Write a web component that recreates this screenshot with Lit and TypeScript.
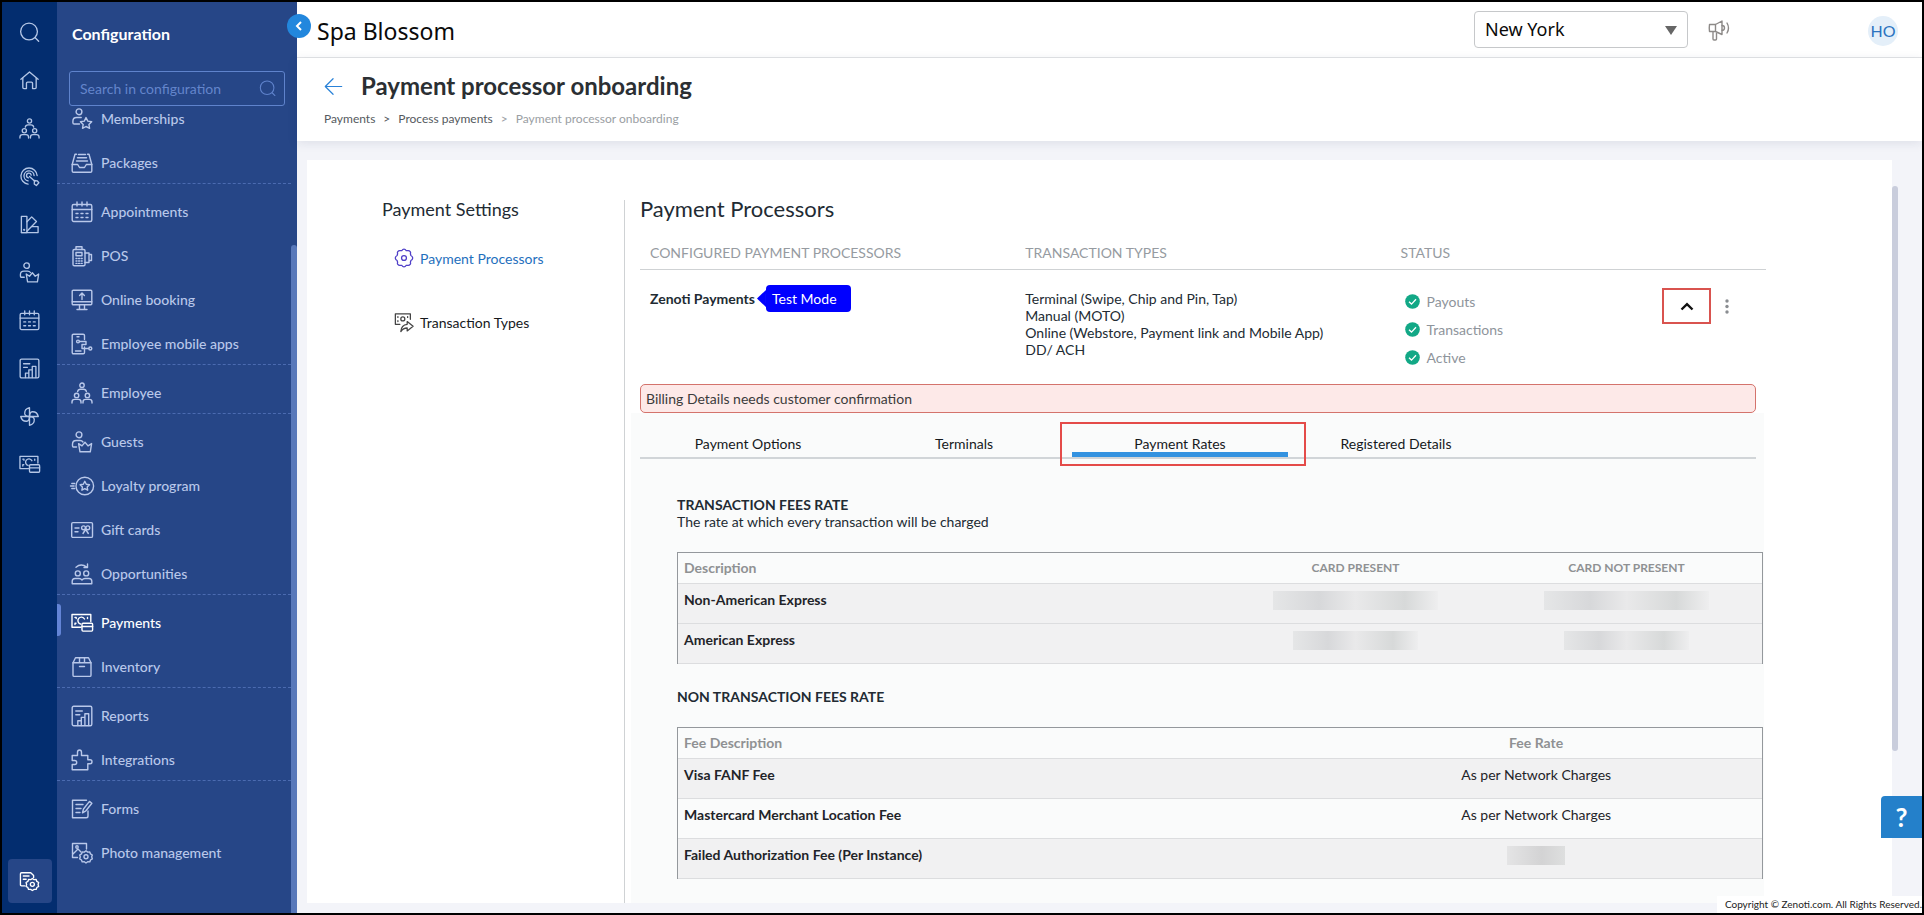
import { LitElement, html, css, svg } from "lit";
import { customElement, property } from "lit/decorators.js";
import { classMap } from "lit/directives/class-map.js";

/* Outline icons, all drawn on a 22 x 22 grid. */
const icons: Record<string, unknown> = {
  search: svg`<circle cx="10.5" cy="10" r="8.8"/><path d="M17 16.5l3.6 3.6"/>`,
  home: svg`<path d="M2 9.8L11 2l9 7.8"/><path d="M4 8.5v9.8q0 1.2 1.2 1.2h2.6v-5.6q0-1.2 1.2-1.2h4q1.2 0 1.2 1.2v5.6h2.6q1.2 0 1.2-1.2V8.5"/>`,
  team: svg`<circle cx="11" cy="3.2" r="2.200"/><path d="M6.600 9.600q.4-2.400 2.800-2.400h3.200q2.400 0 2.800 2.400"/><circle cx="5.600" cy="13.400" r="2.200"/><circle cx="16.400" cy="13.400" r="2.200"/><path d="M1 21v-1q0-2.600 2.600-2.600h3.800Q10 17.400 10 20v1M12 21v-1q0-2.600 2.600-2.600h3.800Q21 17.400 21 20v1"/>`,
  target: svg`<path d="M19 10A8.500 8.500 0 1 0 9.500 19"/><path d="M15.800 10a5.300 5.300 0 1 0-6.300 5.600"/><path d="M12.800 9.500a2.500 2.500 0 1 0-3 2.900"/><path d="M11 11l5.500 5"/><path d="M16.200 15.200l2.800.300 1.800 2-2.600 3-2.200-1.600z"/>`,
  swatch: svg`<path d="M2.500 2.500h5.800v17H2.500z"/><path d="M8.300 8.200l5-5.200 5 4.800L8.300 18"/><path d="M13.600 13.200h6.400v6.300H2.500"/><circle cx="5.400" cy="16.600" r=".500"/>`,
  guest: svg`<circle cx="8" cy="3.800" r="2.900"/><path d="M5.500 16H2.800q-1.300 0-1.300-1.300v-1.500q0-3.700 3.700-3.700H9q2 0 3 1.500"/><path d="M7.600 12.600l3.400 2.300 3-3.600 3 3.600 3.600-2.300-1.300 8.200H9z"/>`,
  calendar: svg`<rect x="1.200" y="3.500" width="19.600" height="17" rx="1.500"/><path d="M1.200 8.500h19.600M6 1v4M11 1v4M16 1v4"/><path d="M5 12.500h2M10 12.500h2M15 12.500h2M5 16.500h2M10 16.500h2M15 16.500h2"/>`,
  report: svg`<rect x="1.200" y="1.200" width="19.600" height="19.600" rx="1.500"/><path d="M4.800 6h6.500M4.800 9.800h4"/><path d="M6.800 20.500v-4.700h3.500v4.700M10.300 16v-3.600h3.600v8M13.900 12.600V8.800h3.800v11.700"/>`,
  fan: svg`<path d="M11 11V1.800Q5.800 3 6 8q.400 3 5 3z"/><path d="M11 11h9.200Q19 5.800 14 6q-3 .400-3 5z"/><path d="M11 11v9.200q5.200-1.200 5-6.200-.400-3-5-3z"/><path d="M11 11H1.800Q3 16.200 8 16q3-.400 3-5z"/>`,
  cash: svg`<path d="M10 15.300H1V2.500h18.800v7"/><path d="M13.500 7a3.500 3.500 0 1 0-4 5M4 5.400h1.200v1.200M16.500 5.400v1.200M4 12.600v-1.400h1"/><rect x="11" y="11.300" width="10.600" height="7.800" rx="1"/><path d="M11 14.500h10.600"/>`,
  settings: svg`<path d="M6 15.500H2.700q-1.200 0-1.200-1.200V3q0-1.200 1.200-1.200h9.600l3 3v2.200"/><path d="M4.500 5.200h6M4.500 8.600h3"/><circle cx="14" cy="14" r="2.100"/><path d="M14 7.800l1.800 1.300 2.200-.200.700 2 1.900 1.200-.600 2 .600 2-1.900 1.200-.700 2-2.200-.100L14 20.400l-1.800-1.200-2.200.100-.700-2-1.900-1.200.600-2-.600-2 1.900-1.200.700-2 2.200.200z"/>`,
  member: svg`<circle cx="8" cy="3.800" r="2.900"/><path d="M8.500 16H3.200q-1.300 0-1.300-1.300v-1.500q0-3.700 3.700-3.700h4.600"/><path d="M15 9.600l1.800 3.500 3.900.600-2.800 2.700.7 3.900-3.600-1.800-3.500 1.800.700-3.900-2.800-2.700 3.900-.600z"/>`,
  box: svg`<path d="M1.200 12.500V19q0 1.300 1.300 1.300h17q1.300 0 1.300-1.300v-6.500h-5.500l-1.800 3h-5l-1.800-3z"/><path d="M1.200 12.500L4 2.200h1.500M20.800 12.500L18 2.200h-1.500"/><path d="M7.500 2.500h7M6.500 5.800h9M5.500 9h11"/>`,
  pos: svg`<rect x="2" y="4.500" width="12" height="16.300" rx="1.300"/><path d="M5 4.500V1.800h6v2.700"/><rect x="5" y="7.500" width="6" height="3.200"/><path d="M5 13.500h1M7.600 13.500h1M10.200 13.500h1M5 16h1M7.600 16h1M10.200 16h1M5 18.400h1M7.600 18.400h1M10.200 18.400h1"/><path d="M14 8h4v9.500h-4M18 9.500h2.500v6H18"/>`,
  online: svg`<rect x="1.200" y="1.200" width="19.600" height="14.500" rx="1"/><path d="M1.200 12.800h19.600M8.500 15.700v4.500M13.500 15.700v4.500M6 20.500h10M11 10.500V4.200M8.600 6.500L11 4.100l2.400 2.400"/>`,
  mobile: svg`<path d="M13.500 14v5.500q0 1.300-1.300 1.300H2.500q-1.300 0-1.300-1.300v-17Q1.200 1.200 2.500 1.200h9.700q1.300 0 1.300 1.300v4"/><path d="M4.500 18h5.500M6 3.800h2"/><circle cx="7" cy="8.500" r="1.400"/><circle cx="19.300" cy="15.500" r="1.500"/><path d="M8.400 8.500h6.600v3h-4v4h6.800"/>`,
  loyalty: svg`<circle cx="13.800" cy="11" r="8.800"/><path d="M13.800 6.300l1.500 3 3.200.500-2.300 2.200.500 3.200-2.900-1.500-2.900 1.500.500-3.200-2.300-2.200 3.200-.500z"/><path d="M.800 8.500h3M-.500 11h3.600M.800 13.500h3"/>`,
  gift: svg`<rect x=".700" y="3.600" width="20.800" height="14.800" rx="1.200"/><path d="M4 9h4M4 12.800h3"/><circle cx="12.500" cy="8.800" r="1.900"/><circle cx="16.800" cy="8.800" r="1.900"/><path d="M14.600 10.500l-2.600 4M14.700 10.500l2.600 4"/>`,
  opp: svg`<circle cx="6.800" cy="10.400" r="2.500"/><circle cx="15.200" cy="10.400" r="2.500"/><path d="M1.200 20.800v-2.500q0-2.800 2.800-2.800h4q1.800 0 3 1.500 1.200-1.500 3-1.500h4q2.800 0 2.800 2.800v2.500z"/><path d="M5 4.200q5-4.500 11 0M16.500 1v3.500h-3.500"/>`,
  inventory: svg`<path d="M2 6.800L4.500 1.800h13L20 6.800v12.400q0 1.200-1.200 1.200H3.200Q2 20.400 2 19.200z"/><path d="M2 6.800h18M8.500 1.800v5M13.500 1.800v5M8.500 10.500h5"/>`,
  puzzle: svg`<path d="M1.200 6.500h5.300V3.200Q6.500 1 8.500 1t2 2.200v3.300h6.300v4.300h2.200q2 0 2 2t-2 2h-2.200v6H1.200v-5.300h2.500q2 0 2-2t-2-2H1.200z"/>`,
  form: svg`<path d="M17 13v5q0 1.800-1.800 1.800H1.500V2.200h14"/><path d="M5 6.500h7M5 10.500h5M5 14.500h4"/><path d="M11.500 14.800l1-3.800 6-7.600 2.400 1.800-6 7.600z"/>`,
  photo: svg`<path d="M6.500 15.500H1.500V1.500h14V7M1.500 12.500L7 7l3 3"/><circle cx="6" cy="5" r="1.200"/><circle cx="15" cy="14.800" r="2"/><path d="M15 8.800l1.700 1.300 2.100-.200.700 2 1.800 1.100-.600 1.900.600 1.900-1.800 1.200-.700 1.900-2.100-.100L15 21l-1.700-1.200-2.100.100-.700-1.900-1.800-1.200.600-1.900-.600-1.900 1.800-1.100.700-2 2.100.200z"/>`,
  gear: svg`<circle cx="11" cy="11" r="2.700"/><path d="M11 1.300q1.500 0 2.300 1.500 1 .3 1.800.1 1.700-.3 2.700 1.100.8 1.100.2 2.400l.6 1.800q1.700.9 1.900 2.300v1q-.2 1.400-1.900 2.300l-.6 1.800q.6 1.300-.2 2.400-1 1.400-2.700 1.100-.8-.2-1.800.1-.8 1.500-2.300 1.500t-2.300-1.500q-1-.3-1.800-.1-1.700.3-2.700-1.100-.8-1.100-.2-2.400l-.6-1.800Q1.700 12.900 1.500 11.500v-1q.2-1.400 1.900-2.300L4 6.400q-.6-1.300.2-2.400 1-1.400 2.700-1.100.8.200 1.800-.1Q9.500 1.300 11 1.300z"/>`,
  transfer: svg`<path d="M6.500 13.500H1.500V2h16.500v6"/><circle cx="9.700" cy="7.600" r="2.200"/><path d="M4.300 5v1M4.300 9.500v1M15 5v1"/><path d="M7.500 21.500q.5-7.500 7-8v-3l6.500 5.300-6.500 5v-3.200q-4.500 0-7 3.900z"/>`,
  horn: svg`<path d="M1.500 5.500Q1 9 1.500 12.500h6L14 15.500V2L7.500 5.500zM7.500 5.500v7M5 12.500V20q0 1 1 1h1.500q1 0 1-1v-7"/><path d="M14 6.500q2.500 0 2.500 2.400T14 11.300M19 4q3 5 0 10"/>`,
  back: svg`<path d="M20.500 11H2.500M10.500 2L1.500 11l9 9"/>`,
};

@customElement("z-icon")
class ZIcon extends LitElement {
  @property() name = "search";
  static styles = css`
    :host { display: inline-flex; flex: none; width: 22px; height: 22px; }
    svg { width: 100%; height: 100%; fill: none; stroke: currentColor; stroke-width: 1.4; stroke-linejoin: round; stroke-linecap: round; overflow: visible; }
  `;
  render() {
    return html`<svg viewBox="0 0 22 22" aria-hidden="true">${icons[this.name]}</svg>`;
  }
}

const menu = [
  [["member", "Memberships"], ["box", "Packages"]],
  [["calendar", "Appointments"], ["pos", "POS"], ["online", "Online booking"], ["mobile", "Employee mobile apps"]],
  [["team", "Employee"]],
  [["guest", "Guests"], ["loyalty", "Loyalty program"], ["gift", "Gift cards"], ["opp", "Opportunities"]],
  [["cash", "Payments"], ["inventory", "Inventory"]],
  [["report", "Reports"], ["puzzle", "Integrations"]],
  [["form", "Forms"], ["photo", "Photo management"]],
];

@customElement("z-sidebar")
class ZSidebar extends LitElement {
  static styles = css`
    :host { display: flex; flex: none; color: #b9c8ea; font: 14px/20px Lato, sans-serif; }
    * { box-sizing: border-box; }
    a { color: inherit; text-decoration: none; }
    .rail { width: 55px; background: #032d6f; display: flex; flex-direction: column; align-items: center; padding: 6px 0 10px; color: #b4c6e6; }
    .rail-link { height: 48px; display: flex; align-items: center; }
    .rail-link z-icon { width: 21px; height: 21px; }
    .rail-link.current { margin-top: auto; width: 44px; height: 44px; justify-content: center; background: #264687; border-radius: 4px; color: #fff; }
    .panel { position: relative; width: 240px; background: #264687; display: flex; flex-direction: column; }
    .title { margin: 0; padding: 22px 15px 0; font-size: 16px; line-height: 20px; font-weight: 700; color: #fff; }
    .search { margin: 27px 12px 0; height: 35px; border: 1px solid #5f83cc; border-radius: 3px; display: flex; align-items: center; padding: 0 8px 0 10px; color: #5f83cc; }
    .search input { flex: 1; min-width: 0; border: 0; padding: 0; background: none; outline: 0; font: inherit; color: #fff; }
    .search input::placeholder { color: #6485cb; opacity: 1; }
    .search z-icon { width: 17px; height: 17px; }
    .body { flex: 1; min-height: 0; display: flex; }
    .list { flex: 1; overflow: visible; margin-top: -7px; }
    .group { display: flex; flex-direction: column; gap: 4px; padding: 8px 0 0; border-bottom: 1px dashed #4b6bb0; }
    .group:first-child { padding-top: 0; }
    .group:last-child { border-bottom: 0; }
    .item { height: 40px; display: flex; align-items: center; gap: 8px; padding-left: 14px; position: relative; font-weight: 500; }
    .item.active { color: #fff; }
    .item.active::before { content: ""; position: absolute; left: 0; top: 1px; width: 4px; height: 32px; background: #6384d6; border-radius: 0 3px 3px 0; }
    .thumb { width: 6px; margin-top: 139px; background: #5878ba; border-radius: 3px 3px 0 0; }
    .collapse { position: absolute; z-index: 2; top: 12px; right: -14px; width: 24px; height: 24px; padding: 0; border: 0; border-radius: 50%; background: #2287dd; display: grid; place-items: center; }
    .collapse svg { width: 8px; height: 10px; fill: none; stroke: #fff; stroke-width: 2; }
  `;
  render() {
    const rail = ["search", "home", "team", "target", "swatch", "guest", "calendar", "report", "fan", "cash"];
    return html`
      <nav class="rail" aria-label="Main">
        ${rail.map((n) => html`<a class="rail-link" href="#${n}" aria-label=${n}><z-icon name=${n}></z-icon></a>`)}
        <a class="rail-link current" href="#configuration" aria-label="Configuration"><z-icon name="settings"></z-icon></a>
      </nav>
      <div class="panel">
        <button class="collapse" aria-label="Collapse menu"><svg viewBox="0 0 8 10"><path d="M6 1L2 5l4 4"/></svg></button>
        <h2 class="title">Configuration</h2>
        <label class="search"><input type="text" placeholder="Search in configuration" aria-label="Search in configuration" /><z-icon name="search"></z-icon></label>
        <div class="body">
          <nav class="list" aria-label="Configuration">
            ${menu.map((g) => html`<div class="group">${g.map(([icon, label]) => html`
              <a class=${classMap({ item: true, active: label === "Payments" })} href="#${icon}"><z-icon name=${icon}></z-icon>${label}</a>`)}</div>`)}
          </nav>
          <div class="thumb"></div>
        </div>
      </div>`;
  }
}

@customElement("z-processors")
class ZProcessors extends LitElement {
  static styles = css`
    :host { display: block; color: #222b33; font: 14px/17px Lato, sans-serif; }
    * { box-sizing: border-box; }
    table { width: 100%; border-spacing: 0; table-layout: fixed; }
    th, td { text-align: left; vertical-align: top; }
    .heading { margin: 0; font-size: 22px; line-height: 18px; font-weight: 400; }
    .list th { padding: 26px 0 8px 10px; font-weight: 400; color: #969ba1; border-bottom: 1px solid #cfd2d4; }
    .list td { padding: 20px 0 0 10px; }
    .list .c-type { width: 33.33%; }
    .list .c-action { width: 9.2%; }
    .list td.name { padding-top: 15px; }
    .name div { display: flex; align-items: center; gap: 2px; }
    .badge { display: flex; height: 27px; color: #fff; font-weight: 400; align-items: stretch; }
    .badge::before { content: ""; width: 9px; margin: 5px 0; background: #00f; clip-path: polygon(100% 0, 100% 100%, 0 50%); }
    .badge span { display: flex; align-items: center; background: #00f; border-radius: 4px; padding: 0 14px 0 6px; }
    .list td.status { padding: 17px 0 13px 14px; }
    .status ul { margin: 0; padding: 0; list-style: none; color: #8e949b; }
    .status li { height: 28px; display: flex; align-items: center; gap: 7px; }
    .tick { width: 15px; height: 15px; flex: none; }
    .list td.actions { padding: 18px 0 0; }
    .actions div { display: flex; align-items: center; gap: 11px; }
    .toggle { width: 49px; height: 36px; padding: 0; background: none; border: 2px solid #d9534f; display: grid; place-items: center; }
    .toggle svg { width: 14px; height: 9px; fill: none; stroke: #111; stroke-width: 2.4; }
    .more { padding: 0; border: 0; background: none; width: 10px; height: 16px; display: grid; place-items: center; }
    .more svg { width: 4px; height: 15px; fill: #8a8d91; }
    .alert { margin-right: 10px; height: 29px; display: flex; align-items: center; padding: 0 5px; border: 1px solid #d4736c; border-radius: 5px; background: #fde9e8; color: #3b3b3b; }
    .panel { margin: 0 2px 0 -9px; background: #fafbfb; min-height: 490px; }
    .tabs { margin: 0 8px 0 9px; display: flex; border-bottom: 2px solid #d1d5d8; }
    .tab { position: relative; flex: 0 1 216px; padding: 23px 0 0; border: 0; border-bottom: 5px solid transparent; background: none; font: 14px/16px Lato, sans-serif; color: #16191c; text-align: center; }
    .tab.active { border-bottom-color: #3392e0; }
    .tab.active::after { content: ""; position: absolute; left: -12px; right: -18px; top: 9px; bottom: -14px; border: 2px solid #e44b49; pointer-events: none; }
    .rates { padding: 37px 1px 0 46px; }
    h4 { margin: 0; font-size: 14px; line-height: 17px; font-weight: 700; }
    p { margin: 0; }
    .fees { margin: 22px 0 24px; border: 1px solid #94989c; border-bottom: 0; color: #1f2429; }
    .fees th, .fees td { padding: 7px 6px 15px; border-bottom: 1px solid #dcdddf; text-align: center; }
    .fees thead th { padding: 6px 6px 7px; color: #8f9193; font-weight: 700; }
    .fees thead .small { font-size: 12px; }
    .fees th:first-child { text-align: left; }
    .shade th, .shade td { background: #f1f1f2; }
    .half { width: 50%; }
    .wide { width: 58.33%; }
    .masked { display: block; height: 19px; margin: 0 auto -2px; background: linear-gradient(90deg, #e5e6e7, #d7d8da 28%, #e9e9ea 50%, #d7d9d9 80%, #eeeeef); }
    .masked.l { width: 165px; }
    .masked.m { width: 125px; }
    .masked.s { width: 58px; background: linear-gradient(90deg, #e4e4e5, #d3d3d4 60%, #dedfdf); }
  `;
  private mask(size: string) {
    return html`<span class="masked ${size}" role="img" aria-label="Hidden value"></span>`;
  }
  render() {
    const tabs = ["Payment Options", "Terminals", "Payment Rates", "Registered Details"];
    return html`
      <h2 class="heading">Payment Processors</h2>
      <table class="list">
        <thead><tr>
          <th class="c-type">CONFIGURED PAYMENT PROCESSORS</th>
          <th class="c-type">TRANSACTION TYPES</th>
          <th>STATUS</th>
          <th class="c-action"></th>
        </tr></thead>
        <tbody><tr>
          <td class="name"><div><b>Zenoti Payments</b><span class="badge"><span>Test Mode</span></span></div></td>
          <td>Terminal (Swipe, Chip and Pin, Tap)<br />Manual (MOTO)<br />Online (Webstore, Payment link and Mobile App)<br />DD/ ACH</td>
          <td class="status"><ul>${["Payouts", "Transactions", "Active"].map((s) => html`
            <li><svg class="tick" viewBox="0 0 15 15" aria-hidden="true"><circle cx="7.500" cy="7.500" r="7.300" fill="#12a886"/><path d="M4 7.800l2.500 2.300L11 5.300" fill="none" stroke="#fff" stroke-width="1.300"/></svg>${s}</li>`)}</ul></td>
          <td class="actions"><div>
            <button class="toggle" aria-label="Collapse details"><svg viewBox="0 0 14 9"><path d="M1.500 7.500L7 2.200l5.500 5.300"/></svg></button>
            <button class="more" aria-label="More actions"><svg viewBox="0 0 4 15"><circle cx="2" cy="2" r="1.700"/><circle cx="2" cy="7.500" r="1.700"/><circle cx="2" cy="13" r="1.700"/></svg></button>
          </div></td>
        </tr></tbody>
      </table>
      <div class="alert" role="alert">Billing Details needs customer confirmation</div>
      <section class="panel">
        <div class="tabs" role="tablist">
          ${tabs.map((t) => html`<button role="tab" aria-selected=${t === "Payment Rates"} class=${classMap({ tab: true, active: t === "Payment Rates" })}>${t}</button>`)}
        </div>
        <div class="rates">
          <h4>TRANSACTION FEES RATE</h4>
          <p>The rate at which every transaction will be charged</p>
          <table class="fees">
            <thead><tr><th class="half">Description</th><th class="small">CARD PRESENT</th><th class="small">CARD NOT PRESENT</th></tr></thead>
            <tbody>
              <tr class="shade"><th>Non-American Express</th><td>${this.mask("l")}</td><td>${this.mask("l")}</td></tr>
              <tr class="shade"><th>American Express</th><td>${this.mask("m")}</td><td>${this.mask("m")}</td></tr>
            </tbody>
          </table>
          <h4>NON TRANSACTION FEES RATE</h4>
          <table class="fees">
            <thead><tr><th class="wide">Fee Description</th><th>Fee Rate</th></tr></thead>
            <tbody>
              <tr class="shade"><th>Visa FANF Fee</th><td>As per Network Charges</td></tr>
              <tr><th>Mastercard Merchant Location Fee</th><td>As per Network Charges</td></tr>
              <tr class="shade"><th>Failed Authorization Fee (Per Instance)</th><td>${this.mask("s")}</td></tr>
            </tbody>
          </table>
        </div>
      </section>`;
  }
}

@customElement("app-root")
class AppRoot extends LitElement {
  static styles = css`
    :host { position: relative; box-sizing: border-box; display: flex; height: 100vh; border: 2px solid #000; overflow: hidden; background: #f3f4f9; font: 14px/17px Lato, sans-serif; color: #222b33; }
    * { box-sizing: border-box; }
    a { text-decoration: none; }
    .page { flex: 1; min-width: 0; display: flex; flex-direction: column; }
    .topbar { height: 56px; flex: none; display: flex; align-items: center; background: #fff; border-bottom: 1px solid #e4e5e7; padding: 0 24px 0 20px; }
    .brand { margin: 0; padding-top: 2px; font: 23px/32px "Noto Sans", sans-serif; color: #0a0a0a; flex: 1; }
    .center { position: relative; width: 214px; margin-right: 20px; margin-top: -1px; }
    .center select { display: block; appearance: none; width: 100%; height: 37px; padding: 0 30px 1px 10px; border: 1px solid #c6c8ca; border-radius: 4px; background: #fff; font: 18px "Noto Sans", sans-serif; color: #0a0a0a; }
    .center::after { content: ""; position: absolute; right: 11px; top: 15px; border: 6px solid transparent; border-top: 9px solid #666; border-bottom: 0; pointer-events: none; }
    .icon-btn { padding: 0; border: 0; background: none; color: #8d8a88; display: flex; }
    .avatar { margin-left: 138px; margin-top: 2px; width: 30px; height: 30px; padding: 0; border: 0; border-radius: 50%; background: #e4eff9; color: #2a73c0; font: 16px Lato, sans-serif; }
    .subhead { position: relative; z-index: 1; flex: none; height: 83px; background: #fff; box-shadow: 0 2px 10px rgba(30, 40, 80, 0.1); padding: 14px 27px 0; }
    .title-row { display: flex; align-items: center; gap: 18px; }
    .title-row a { color: #2a82d8; display: flex; }
    .title-row z-icon { width: 19px; height: 19px; }
    h1 { margin: 0; font-size: 24px; line-height: 28px; font-weight: 700; color: #2b2f33; }
    .crumbs { display: flex; gap: 8px; padding-top: 11px; font-size: 12px; line-height: 16px; color: #9a9ea3; }
    .crumbs a { color: #555a60; }
    .crumbs .dark { color: #555a60; }
    .content { flex: 1; min-height: 0; display: flex; padding: 19px 24px 10px 10px; }
    .card { flex: 1; min-width: 0; background: #fff; overflow: hidden; display: flex; padding-top: 40px; }
    .side { flex: none; width: 318px; border-right: 1px solid #cfd2d4; padding-left: 75px; }
    .side h2 { margin: 0 0 28px; font-size: 18px; line-height: 18px; font-weight: 400; }
    .side a { display: flex; align-items: center; height: 24px; gap: 6px; margin: 0 0 40px 12px; color: #16191c; }
    .side z-icon { width: 20px; height: 20px; color: #444; }
    .side .on { color: #1f70bd; }
    .side .on z-icon { color: #5040c8; }
    z-processors { flex: 1; min-width: 0; padding: 0 126px 0 15px; }
    .scroll { flex: none; width: 6px; height: 76%; margin-top: 26px; border-radius: 3px; background: #c9cddc; }
    .help { position: absolute; z-index: 2; right: 0; bottom: 75px; width: 41px; height: 42px; padding: 0; border: 0; border-radius: 4px 0 0 0; background: #2480ca; color: #fff; font: 700 26px Lato, sans-serif; }
    .copyright { position: absolute; z-index: 2; right: 0; bottom: 0; background: #fff; padding: 0 0 0 8px; font-size: 10px; line-height: 17px; color: #222; }
  `;
  render() {
    return html`
      <z-sidebar></z-sidebar>
      <div class="page">
        <header class="topbar">
          <p class="brand">Spa Blossom</p>
          <div class="center"><select aria-label="Center"><option>New York</option></select></div>
          <button class="icon-btn" aria-label="Announcements"><z-icon name="horn"></z-icon></button>
          <button class="avatar">HO</button>
        </header>
        <div class="subhead">
          <div class="title-row"><a href="#back" aria-label="Back"><z-icon name="back"></z-icon></a><h1>Payment processor onboarding</h1></div>
          <nav class="crumbs" aria-label="Breadcrumb">
            <a href="#payments">Payments</a><span class="dark">&gt;</span><a href="#process">Process payments</a><span>&gt;</span><span>Payment processor onboarding</span>
          </nav>
        </div>
        <main class="content">
          <div class="card">
            <nav class="side" aria-label="Payment Settings">
              <h2>Payment Settings</h2>
              <a class="on" href="#processors"><z-icon name="gear"></z-icon>Payment Processors</a>
              <a href="#types"><z-icon name="transfer"></z-icon>Transaction Types</a>
            </nav>
            <z-processors></z-processors>
          </div>
          <div class="scroll"></div>
        </main>
      </div>
      <button class="help" aria-label="Help">?</button>
      <footer class="copyright">Copyright © Zenoti.com. All Rights Reserved.</footer>`;
  }
}
